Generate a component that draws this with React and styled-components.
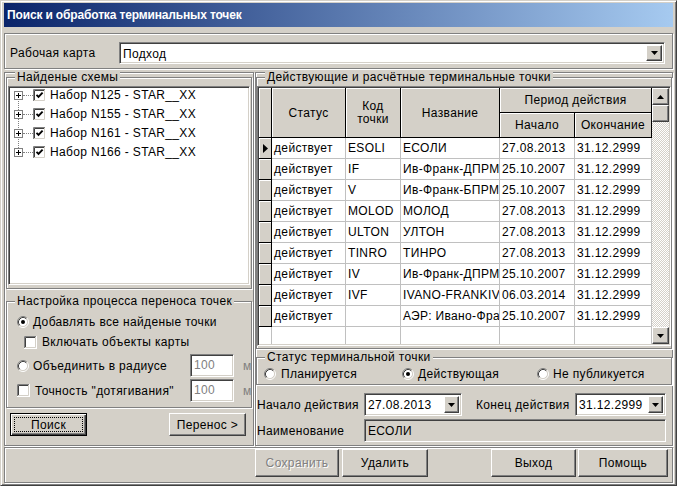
import React from 'react';
import styled, { createGlobalStyle, css } from 'styled-components';

const FACE = '#D4D0C8';

const GlobalStyle = createGlobalStyle`
  * { box-sizing: border-box; }
  html, body { margin: 0; padding: 0; background: #fff; }
  body {
    font-family: "Liberation Sans", Arial, sans-serif;
    font-size: 12px;
    letter-spacing: 0.35px;
    color: #000;
  }
`;

// classic 3D edges
const raised = css`
  border: 1px solid;
  border-color: #fff #404040 #404040 #fff;
  box-shadow: inset -1px -1px 0 #808080;
  background: ${FACE};
`;

const sunken = css`
  border: 1px solid;
  border-color: #808080 #fff #fff #808080;
  box-shadow: inset 1px 1px 0 #404040, inset -1px -1px 0 ${FACE};
`;

const etched = css`
  border: 1px solid #808080;
  box-shadow: inset 1px 1px 0 #fff, 1px 1px 0 #fff;
`;

const Window = styled.div`
  width: 677px;
  height: 486px;
  background: ${FACE};
  border: 1px solid;
  border-color: ${FACE} #404040 #404040 ${FACE};
  box-shadow: inset 1px 1px 0 #fff, inset -1px -1px 0 #808080;
  padding: 2px;
  display: flex;
  flex-direction: column;
  overflow: hidden;
`;

const TitleBar = styled.div`
  height: 24px;
  margin: 0 1px;
  flex: none;
  background: linear-gradient(to right, #0a246a, #a6caf0);
  color: #fff;
  font-weight: bold;
  letter-spacing: -0.15px;
  line-height: 24px;
  padding-left: 3px;
  white-space: nowrap;
`;

const TopPanel = styled.div`
  ${etched};
  height: 36px;
  flex: none;
  margin: 6px 1px 0;
  display: flex;
  align-items: flex-start;
  padding: 8px 7px 0 5px;
`;

const FieldLabel = styled.span`
  width: ${p => p.$w}px;
  margin-left: ${p => p.$ml || 0}px;
  flex: none;
  line-height: 22px;
  white-space: nowrap;
`;

const Combo = styled.div`
  ${sunken};
  background: ${p => p.$bg || '#fff'};
  height: ${p => p.$h || 22}px;
  width: ${p => (p.$w ? `${p.$w}px` : 'auto')};
  flex: ${p => (p.$w ? 'none' : 1)};
  display: flex;
  align-items: stretch;
  padding: 2px;
`;

const ComboText = styled.span`
  flex: 1;
  padding-left: 1px;
  line-height: ${p => p.$lh || 18}px;
  white-space: nowrap;
  overflow: hidden;
`;

const DropButton = styled.span`
  ${raised};
  width: ${p => p.$w || 16}px;
  flex: none;
  display: flex;
  align-items: center;
  justify-content: center;
`;

const Main = styled.div`
  height: 374px;
  flex: none;
  margin: 3px 1px 0;
  display: flex;
  gap: 1px;
`;

const LeftPanel = styled.div`
  ${etched};
  width: 250px;
  flex: none;
  padding: 4px 1px 0;
  display: flex;
  flex-direction: column;
`;

const RightPanel = styled.div`
  ${etched};
  flex: 1;
  padding: 4px 0 0;
  display: flex;
  flex-direction: column;
`;

const Group = styled.div`
  ${etched};
  position: relative;
  height: ${p => p.$h}px;
  margin-top: ${p => p.$mt || 0}px;
  padding: ${p => p.$pad || '0'};
  flex: none;
  display: flex;
  flex-direction: column;
`;

const Caption = styled.span`
  position: absolute;
  top: -7px;
  left: 8px;
  padding: 0 2px;
  background: ${FACE};
  line-height: 13px;
  white-space: nowrap;
`;

const TreeBox = styled.div`
  ${sunken};
  flex: 1;
  background: #fff;
  padding: 1px;
`;

const TreeList = styled.div`
  position: relative;
  padding: 1px 0 0 4px;
  &::before {
    content: '';
    position: absolute;
    left: 8px;
    top: 7px;
    height: 57px;
    border-left: 1px dotted #808080;
  }
`;

const TreeRow = styled.div`
  position: relative;
  height: 13px;
  margin-bottom: 6px;
  display: flex;
  align-items: center;
  white-space: nowrap;
`;

const Connector = styled.span`
  width: 10px;
  flex: none;
  border-top: 1px dotted #808080;
`;

const TreeText = styled.span`
  margin-left: 4px;
  line-height: 13px;
`;

const OptRow = styled.div`
  height: ${p => p.$h || 20}px;
  margin-top: ${p => p.$mt || 0}px;
  padding-left: ${p => p.$pl || 0}px;
  display: flex;
  align-items: center;
  white-space: nowrap;
`;

const Option = styled.label`
  display: flex;
  align-items: center;
  gap: ${p => p.$gap || 4}px;
  width: ${p => (p.$w ? `${p.$w}px` : 'auto')};
  flex: none;
  white-space: nowrap;
`;

const SmallInput = styled.div`
  ${sunken};
  width: 44px;
  height: 23px;
  flex: none;
  background: #fff;
  color: #808080;
  padding: 2px 3px;
  line-height: 17px;
`;

const Unit = styled.span`
  margin-left: 9px;
  color: #808080;
`;

const ButtonRow = styled.div`
  height: 23px;
  margin-top: 5px;
  display: flex;
  justify-content: space-between;
  padding: 0 6px 0 4px;
`;

const Button = styled.button`
  ${raised};
  position: relative;
  font: inherit;
  letter-spacing: inherit;
  width: ${p => p.$w}px;
  height: ${p => p.$h || 23}px;
  margin-left: ${p => p.$ml || 0}px;
  flex: none;
  padding: 0;
  color: #000;
  &:disabled {
    color: #808080;
    text-shadow: 1px 1px 0 #fff;
  }
  ${p =>
    p.$default &&
    css`
      border: 1px solid #000;
      box-shadow: inset 1px 1px 0 #fff, inset -1px -1px 0 #404040, inset -2px -2px 0 #808080;
      &::after {
        content: '';
        position: absolute;
        inset: 3px;
        border: 1px dotted #000;
      }
    `}
`;

const GridBox = styled.div`
  ${sunken};
  flex: 1;
  display: flex;
  padding: 1px;
  background: #fff;
`;

const GridTable = styled.div`
  flex: 1;
  display: grid;
  grid-template-columns: 13px 74px 55px 99px 75px 77px;
  grid-template-rows: 25px 25px repeat(9, 21px) 1fr;
  overflow: hidden;
`;

const HeadCell = styled.div`
  grid-area: ${p => p.$area};
  background: ${FACE};
  border-right: 1px solid #000;
  border-bottom: 1px solid #000;
  box-shadow: inset 1px 1px 0 #fff;
  display: flex;
  align-items: center;
  justify-content: center;
  text-align: center;
  line-height: 13px;
  padding-top: 1px;
`;

const IndCell = styled(HeadCell)`
  justify-content: flex-start;
  padding-left: 4px;
`;

const Cell = styled.div`
  background: #fff;
  border-right: 1px solid #c0c0c0;
  border-bottom: ${p => (p.$filler ? 'none' : '1px solid #c0c0c0')};
  padding: 1px 0 0 2px;
  line-height: 19px;
  white-space: nowrap;
  overflow: hidden;
`;

const ScrollBar = styled.div`
  width: 17px;
  flex: none;
  display: flex;
  flex-direction: column;
`;

const ScrollBtn = styled.div`
  ${raised};
  height: 17px;
  flex: none;
  display: flex;
  align-items: center;
  justify-content: center;
`;

const Track = styled.div`
  flex: 1;
  background-color: #fff;
  background-image: repeating-conic-gradient(${FACE} 0% 25%, #fff 0% 50%);
  background-size: 2px 2px;
`;

const RadioRow = styled.div`
  height: 16px;
  display: flex;
  align-items: center;
  padding-left: 7px;
`;

const FormRow = styled.div`
  height: 23px;
  margin-top: ${p => p.$mt || 0}px;
  display: flex;
  align-items: center;
  padding-left: 1px;
`;

const BottomPanel = styled.div`
  ${etched};
  height: 36px;
  flex: none;
  margin: 1px 1px 0;
  display: flex;
  align-items: flex-start;
  padding: 1px 4px 0 250px;
`;

const Spacer = styled.div`
  flex: 1;
`;

const Svg = styled.svg`
  display: block;
  flex: none;
`;

const Arrow = ({ up }) => (
  <Svg width="7" height="4" viewBox="0 0 7 4">
    <polygon points={up ? '0,4 7,4 3.5,0' : '0,0 7,0 3.5,4'} fill="#000" />
  </Svg>
);

const Radio = ({ checked }) => (
  <Svg width="12" height="12" viewBox="0 0 12 12">
    <circle cx="6" cy="6" r="4.5" fill="#fff" />
    <path d="M2.11 9.89 A5.5 5.5 0 0 1 9.89 2.11" stroke="#808080" fill="none" />
    <path d="M9.89 2.11 A5.5 5.5 0 0 1 2.11 9.89" stroke="#fff" fill="none" />
    <path d="M2.82 9.18 A4.5 4.5 0 0 1 9.18 2.82" stroke="#404040" fill="none" />
    <path d="M9.18 2.82 A4.5 4.5 0 0 1 2.82 9.18" stroke={FACE} fill="none" />
    {checked && <circle cx="6" cy="6" r="2" fill="#000" />}
  </Svg>
);

const Check = ({ checked }) => (
  <Svg width="13" height="13" viewBox="0 0 13 13">
    <rect x="0" y="0" width="13" height="13" fill="#fff" />
    <path d="M0.5 12 V0.5 H12" stroke="#808080" fill="none" />
    <path d="M1.5 11 V1.5 H11" stroke="#404040" fill="none" />
    <path d="M1 11.5 H11.5 V1" stroke={FACE} fill="none" />
    {checked && <path d="M3.5 5.8 L5.5 7.8 L9.6 3.6" stroke="#000" strokeWidth="1.9" fill="none" />}
  </Svg>
);

const Expander = () => (
  <Svg width="9" height="9" viewBox="0 0 9 9">
    <rect x="0.5" y="0.5" width="8" height="8" fill="#fff" stroke="#808080" />
    <path d="M2 4.5 H7 M4.5 2 V7" stroke="#000" />
  </Svg>
);

const RowMarker = () => (
  <Svg width="5" height="9" viewBox="0 0 5 9">
    <polygon points="0,0 5,4.5 0,9" fill="#000" />
  </Svg>
);

const schemes = ['Набор N125 - STAR__XX', 'Набор N155 - STAR__XX', 'Набор N161 - STAR__XX', 'Набор N166 - STAR__XX'];

const rows = [
  ['действует', 'ESOLI', 'ЕСОЛИ', '27.08.2013', '31.12.2999'],
  ['действует', 'IF', 'Ив-Франк-ДПРМ', '25.10.2007', '31.12.2999'],
  ['действует', 'V', 'Ив-Франк-БПРМ', '25.10.2007', '31.12.2999'],
  ['действует', 'MOLOD', 'МОЛОД', '27.08.2013', '31.12.2999'],
  ['действует', 'ULTON', 'УЛТОН', '27.08.2013', '31.12.2999'],
  ['действует', 'TINRO', 'ТИНРО', '27.08.2013', '31.12.2999'],
  ['действует', 'IV', 'Ив-Франк-ДПРМ', '25.10.2007', '31.12.2999'],
  ['действует', 'IVF', 'IVANO-FRANKIVSK', '06.03.2014', '31.12.2999'],
  ['действует', '', 'АЭР: Ивано-Франковск', '25.10.2007', '31.12.2999'],
];

export default function App() {
  return (
    <>
      <GlobalStyle />
      <Window>
        <TitleBar>Поиск и обработка терминальных точек</TitleBar>

        <TopPanel>
          <FieldLabel $w={109}>Рабочая карта</FieldLabel>
          <Combo>
            <ComboText>Подход</ComboText>
            <DropButton><Arrow /></DropButton>
          </Combo>
        </TopPanel>

        <Main>
          <LeftPanel>
            <Group $h={212} $pad="8px 1px 3px">
              <Caption>Найденые схемы</Caption>
              <TreeBox>
                <TreeList>
                  {schemes.map(s => (
                    <TreeRow key={s}>
                      <Expander />
                      <Connector />
                      <Check checked />
                      <TreeText>{s}</TreeText>
                    </TreeRow>
                  ))}
                </TreeList>
              </TreeBox>
            </Group>

            <Group $h={107} $mt={12} $pad="10px 0 0 10px">
              <Caption>Настройка процесса переноса точек</Caption>
              <OptRow>
                <Option><Radio checked />Добавлять все найденые точки</Option>
              </OptRow>
              <OptRow $pl={7}>
                <Option $gap={5}><Check />Включать объекты карты</Option>
              </OptRow>
              <OptRow $h={23} $mt={2}>
                <Option $w={173}><Radio />Объединить в радиусе</Option>
                <SmallInput>100</SmallInput>
                <Unit>м</Unit>
              </OptRow>
              <OptRow $h={23} $mt={2}>
                <Option $w={173} $gap={5}><Check />Точность "дотягивания"</Option>
                <SmallInput>100</SmallInput>
                <Unit>м</Unit>
              </OptRow>
            </Group>

            <ButtonRow>
              <Button $w={77} $default>Поиск</Button>
              <Button $w={77}>Перенос &gt;</Button>
            </ButtonRow>
          </LeftPanel>

          <RightPanel>
            <Group $h={272} $pad="8px 0 2px 0">
              <Caption>Действующие и расчётные терминальные точки</Caption>
              <GridBox>
                <GridTable>
                  <HeadCell $area="1 / 1 / 3 / 2" />
                  <HeadCell $area="1 / 2 / 3 / 3">Статус</HeadCell>
                  <HeadCell $area="1 / 3 / 3 / 4">Код<br />точки</HeadCell>
                  <HeadCell $area="1 / 4 / 3 / 5">Название</HeadCell>
                  <HeadCell $area="1 / 5 / 2 / 7">Период действия</HeadCell>
                  <HeadCell $area="2 / 5 / 3 / 6">Начало</HeadCell>
                  <HeadCell $area="2 / 6 / 3 / 7">Окончание</HeadCell>
                  {rows.map((r, i) => (
                    <React.Fragment key={i}>
                      <IndCell>{i === 0 && <RowMarker />}</IndCell>
                      {r.map((v, j) => (
                        <Cell key={j}>{v}</Cell>
                      ))}
                    </React.Fragment>
                  ))}
                  {[0, 1, 2, 3, 4, 5].map(k => (
                    <Cell key={`f${k}`} $filler />
                  ))}
                </GridTable>
                <ScrollBar>
                  <ScrollBtn><Arrow up /></ScrollBtn>
                  <ScrollBtn />
                  <Track />
                  <ScrollBtn><Arrow /></ScrollBtn>
                </ScrollBar>
              </GridBox>
            </Group>

            <Group $h={28} $mt={8} $pad="8px 0 0 0">
              <Caption>Статус терминальной точки</Caption>
              <RadioRow>
                <Option $w={138} $gap={5}><Radio />Планируется</Option>
                <Option $w={135} $gap={4}><Radio checked />Действующая</Option>
                <Option $gap={4}><Radio />Не публикуется</Option>
              </RadioRow>
            </Group>

            <FormRow $mt={8}>
              <FieldLabel $w={107}>Начало действия</FieldLabel>
              <Combo $w={98} $h={23}>
                <ComboText $lh={19}>27.08.2013</ComboText>
                <DropButton $w={15}><Arrow /></DropButton>
              </Combo>
              <FieldLabel $w={99} $ml={14}>Конец действия</FieldLabel>
              <Combo $w={91} $h={23}>
                <ComboText $lh={19}>31.12.2999</ComboText>
                <DropButton $w={15}><Arrow /></DropButton>
              </Combo>
            </FormRow>

            <FormRow $mt={3}>
              <FieldLabel $w={107}>Наименование</FieldLabel>
              <Combo $w={302} $h={23} $bg={FACE}>
                <ComboText $lh={19}>ЕСОЛИ</ComboText>
              </Combo>
            </FormRow>
          </RightPanel>
        </Main>

        <BottomPanel>
          <Button $w={84} $h={28} disabled>Сохранить</Button>
          <Button $w={86} $h={28} $ml={3}>Удалить</Button>
          <Spacer />
          <Button $w={85} $h={28}>Выход</Button>
          <Button $w={90} $h={28} $ml={2}>Помощь</Button>
        </BottomPanel>
      </Window>
    </>
  );
}
